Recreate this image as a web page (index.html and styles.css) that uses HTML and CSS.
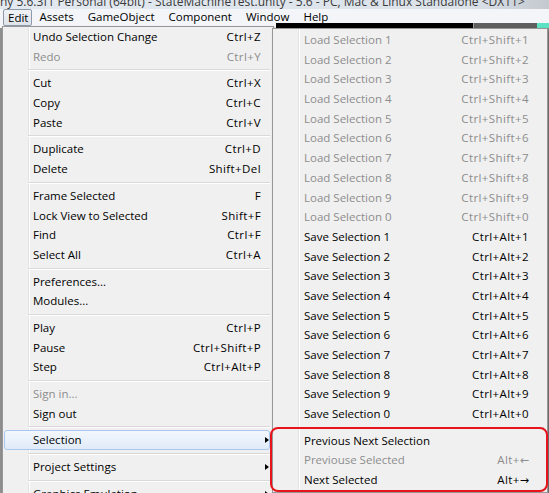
FILE: index.html
```html
<!DOCTYPE html>
<html>
<head>
<meta charset="utf-8">
<link rel="stylesheet" href="styles.css">
</head>
<body>
<div class="titlebar"><span class="title">ny 5.6.3f1 Personal (64bit) - StateMachineTest.unity - 5.6 - PC, Mac &amp; Linux Standalone &lt;DX11&gt;</span></div>
<div class="menubar">
  <span class="mb-item active">Edit</span>
  <span class="mb-item">Assets</span>
  <span class="mb-item">GameObject</span>
  <span class="mb-item">Component</span>
  <span class="mb-item">Window</span>
  <span class="mb-item">Help</span>
</div>
<div class="workspace">
  <div class="strip">
    <div class="strip-light"></div>
    <div class="strip-dark"></div>
    <div class="strip-gray"></div>
    <div class="strip-teal"></div>
  </div>
</div>

<div class="menu main-menu">
  <div class="item"><span>Undo Selection Change</span><span class="key">Ctrl+Z</span></div>
  <div class="item off"><span>Redo</span><span class="key">Ctrl+Y</span></div>
  <div class="sep"></div>
  <div class="item"><span>Cut</span><span class="key">Ctrl+X</span></div>
  <div class="item"><span>Copy</span><span class="key">Ctrl+C</span></div>
  <div class="item"><span>Paste</span><span class="key">Ctrl+V</span></div>
  <div class="sep"></div>
  <div class="item"><span>Duplicate</span><span class="key">Ctrl+D</span></div>
  <div class="item"><span>Delete</span><span class="key">Shift+Del</span></div>
  <div class="sep"></div>
  <div class="item"><span>Frame Selected</span><span class="key">F</span></div>
  <div class="item"><span>Lock View to Selected</span><span class="key">Shift+F</span></div>
  <div class="item"><span>Find</span><span class="key">Ctrl+F</span></div>
  <div class="item"><span>Select All</span><span class="key">Ctrl+A</span></div>
  <div class="sep"></div>
  <div class="item"><span>Preferences...</span></div>
  <div class="item"><span>Modules...</span></div>
  <div class="sep"></div>
  <div class="item"><span>Play</span><span class="key">Ctrl+P</span></div>
  <div class="item"><span>Pause</span><span class="key">Ctrl+Shift+P</span></div>
  <div class="item"><span>Step</span><span class="key">Ctrl+Alt+P</span></div>
  <div class="sep"></div>
  <div class="item off"><span>Sign in...</span></div>
  <div class="item"><span>Sign out</span></div>
  <div class="sep"></div>
  <div class="item hl sub-item"><span>Selection</span><i class="arrow"></i></div>
  <div class="sep"></div>
  <div class="item sub-item"><span>Project Settings</span><i class="arrow"></i></div>
  <div class="sep"></div>
  <div class="item sub-item"><span>Graphics Emulation</span><i class="arrow"></i></div>
</div>

<div class="menu sub-menu">
  <div class="item off"><span>Load Selection 1</span><span class="key">Ctrl+Shift+1</span></div>
  <div class="item off"><span>Load Selection 2</span><span class="key">Ctrl+Shift+2</span></div>
  <div class="item off"><span>Load Selection 3</span><span class="key">Ctrl+Shift+3</span></div>
  <div class="item off"><span>Load Selection 4</span><span class="key">Ctrl+Shift+4</span></div>
  <div class="item off"><span>Load Selection 5</span><span class="key">Ctrl+Shift+5</span></div>
  <div class="item off"><span>Load Selection 6</span><span class="key">Ctrl+Shift+6</span></div>
  <div class="item off"><span>Load Selection 7</span><span class="key">Ctrl+Shift+7</span></div>
  <div class="item off"><span>Load Selection 8</span><span class="key">Ctrl+Shift+8</span></div>
  <div class="item off"><span>Load Selection 9</span><span class="key">Ctrl+Shift+9</span></div>
  <div class="item off"><span>Load Selection 0</span><span class="key">Ctrl+Shift+0</span></div>
  <div class="item"><span>Save Selection 1</span><span class="key">Ctrl+Alt+1</span></div>
  <div class="item"><span>Save Selection 2</span><span class="key">Ctrl+Alt+2</span></div>
  <div class="item"><span>Save Selection 3</span><span class="key">Ctrl+Alt+3</span></div>
  <div class="item"><span>Save Selection 4</span><span class="key">Ctrl+Alt+4</span></div>
  <div class="item"><span>Save Selection 5</span><span class="key">Ctrl+Alt+5</span></div>
  <div class="item"><span>Save Selection 6</span><span class="key">Ctrl+Alt+6</span></div>
  <div class="item"><span>Save Selection 7</span><span class="key">Ctrl+Alt+7</span></div>
  <div class="item"><span>Save Selection 8</span><span class="key">Ctrl+Alt+8</span></div>
  <div class="item"><span>Save Selection 9</span><span class="key">Ctrl+Alt+9</span></div>
  <div class="item"><span>Save Selection 0</span><span class="key">Ctrl+Alt+0</span></div>
  <div class="sep"></div>
  <div class="item"><span>Previous Next Selection</span></div>
  <div class="item off"><span>Previouse Selected</span><span class="key">Alt+<span class="glyph">←</span></span></div>
  <div class="item"><span>Next Selected</span><span class="key">Alt+<span class="glyph">→</span></span></div>
</div>

<div class="callout"></div>
</body>
</html>
```

FILE: styles.css
```css
* { box-sizing: border-box; }

body {
  margin: 0;
  width: 549px;
  height: 493px;
  overflow: hidden;
  position: relative;
  background: #8f8f8f;
  font-family: "Open Sans", "Noto Sans", sans-serif;
  font-size: 11.5px;
  color: #000;
}

.titlebar {
  height: 9px;
  overflow: hidden;
  background: linear-gradient(to right, #e3e9f0 0%, #dbe2ea 85%, #c4c9cf 100%);
}

.title {
  display: block;
  margin-top: -4px;
  white-space: nowrap;
  line-height: 12px;
  height: 12px;
  font-size: 12px;
  color: #3a3a3a;
}

.menubar {
  height: 14px;
  display: flex;
  align-items: flex-start;
  padding-left: 3px;
  background: #f3f5f8;
  position: relative;
  z-index: 1;
}

.mb-item {
  height: 17px;
  line-height: 16px;
  padding: 0 7px;
  white-space: nowrap;
}

.mb-item.active {
  border: 1px solid #8e9aab;
  border-radius: 2px;
  padding: 0 3px 0 4px;
  background: linear-gradient(#f0f3f6, #dfe4ea);
}

.workspace {
  height: 470px;
}

.strip {
  display: flex;
  height: 5px;
}

.strip-light { width: 276px; background: #f3f5f8; }
.strip-dark { width: 197px; background: #000; }
.strip-gray { width: 64px; background: #5e5e5e; border-left: 1px solid #999; }
.strip-teal { flex: 1; background: #5ee2c4; }

.menu {
  position: absolute;
  border: 1px solid #979797;
  background:
    linear-gradient(to right, transparent 25px, #e2e3e3 25px, #e2e3e3 26px, #fff 26px, #fff 27px, transparent 27px),
    #f0f0f0;
  box-shadow: 2px 2px 3px rgba(0, 0, 0, 0.3);
  padding: 0 3px 0 1px;
}

.main-menu {
  left: 2px;
  top: 26px;
  width: 272px;
}

.sub-menu {
  left: 272px;
  top: 28px;
  width: 276px;
  padding-top: 1px;
  padding-bottom: 2px;
}

.item {
  position: relative;
  display: flex;
  justify-content: space-between;
  height: 19.7px;
  line-height: 19.7px;
  white-space: nowrap;
}

.main-menu .item { padding: 0 9px 0 29px; }
.sub-menu .item { padding: 0 15px 0 30px; }

.key { letter-spacing: 0.4px; }

.glyph {
  font-family: "DejaVu Sans", sans-serif;
  font-size: 11px;
  letter-spacing: 0;
}

.item.off { color: #8d8d8d; }

.item.hl {
  border: 1px solid #aac8ee;
  border-radius: 3px;
  background: linear-gradient(#f3f7fd, #e0ebf9);
  line-height: 17.7px;
  padding-left: 28px;
}

.sep {
  height: 7px;
  margin-left: 24px;
  background: linear-gradient(transparent 3px, #d9d9d9 3px, #d9d9d9 4px, #fff 4px, #fff 5px, transparent 5px);
}

.arrow {
  position: absolute;
  right: 1px;
  top: 7px;
  width: 0;
  height: 0;
  border-left: 4px solid #000;
  border-top: 3.5px solid transparent;
  border-bottom: 3.5px solid transparent;
}

.hl .arrow { top: 6px; right: 0; }

.callout {
  position: absolute;
  left: 270px;
  top: 427px;
  width: 278px;
  height: 65px;
  border: 2px solid #e8131b;
  border-radius: 8px;
}
```
